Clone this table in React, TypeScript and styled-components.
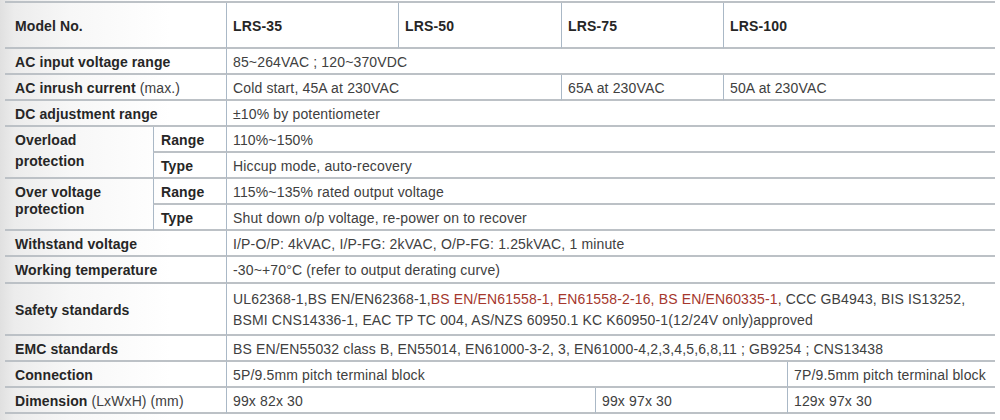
import React from "react"
import styled, { createGlobalStyle } from "styled-components"

const GlobalStyle = createGlobalStyle`
  html, body {
    margin: 0;
    padding: 0;
  }
  body {
    width: 1000px;
    height: 420px;
    overflow: hidden;
    font-family: "Liberation Sans", Arial, sans-serif;
    background: linear-gradient(90deg, #e0e0e0 0px, #ececec 14px, #f7f7f7 70px, #ffffff 170px);
  }
`

const Table = styled.div`
  display: grid;
  grid-template-columns: 148px 73px 172px 163px 34px 128px 64px 208px;
  grid-template-rows: 46px repeat(8, 26px) 27px 52px 26px 26px 26px;
  width: 990px;
  margin: 1px 0 0 5px;
  border-top: 2px solid #bcc1c6;
  font-size: 14px;
  color: #404040;
`

interface CellProps {
  $span?: number
  $rows?: number
  $kind?: "label" | "sub" | "value"
  $top?: number
  $lh?: number
}

const Cell = styled.div<CellProps>`
  box-sizing: border-box;
  grid-column: span ${(p) => p.$span ?? 1};
  grid-row: span ${(p) => p.$rows ?? 1};
  border-bottom: 2px solid #bcc1c6;
  border-left: ${(p) => (p.$kind === "label" ? "none" : "1px solid #aab8c6")};
  padding-left: ${(p) => (p.$kind === "label" ? "10px" : p.$kind === "sub" ? "7px" : "6px")};
  padding-top: ${(p) => p.$top ?? 1}px;
  display: flex;
  align-items: ${(p) => (p.$top !== undefined ? "flex-start" : "center")};
  line-height: ${(p) => p.$lh ?? 18}px;
  white-space: nowrap;
  letter-spacing: ${(p) => (p.$kind === "value" ? "0.15px" : "0.1px")};
  font-weight: ${(p) => (p.$kind === "value" ? 400 : 700)};
  color: ${(p) => (p.$kind === "value" ? "#404040" : "#262626")};
`

const Head = styled.span`
  font-weight: 700;
  color: #262626;
`

const Thin = styled.span`
  font-weight: 400;
  color: #404040;
`

const Red = styled.span`
  color: #a5372d;
`

export default function App() {
  return (
    <>
      <GlobalStyle />
      <Table>
        <Cell $kind="label" $span={2}>Model No.</Cell>
        <Cell $kind="value"><Head>LRS-35</Head></Cell>
        <Cell $kind="value"><Head>LRS-50</Head></Cell>
        <Cell $kind="value" $span={2}><Head>LRS-75</Head></Cell>
        <Cell $kind="value" $span={2}><Head>LRS-100</Head></Cell>

        <Cell $kind="label" $span={2}>AC input voltage range</Cell>
        <Cell $kind="value" $span={6}>85~264VAC ; 120~370VDC</Cell>

        <Cell $kind="label" $span={2}>AC inrush current&nbsp;<Thin>(max.)</Thin></Cell>
        <Cell $kind="value" $span={2}>Cold start, 45A at 230VAC</Cell>
        <Cell $kind="value" $span={2}>65A at 230VAC</Cell>
        <Cell $kind="value" $span={2}>50A at 230VAC</Cell>

        <Cell $kind="label" $span={2}>DC adjustment range</Cell>
        <Cell $kind="value" $span={6}>±10% by potentiometer</Cell>

        <Cell $kind="label" $rows={2} $top={3} $lh={21}>Overload<br />protection</Cell>
        <Cell $kind="sub">Range</Cell>
        <Cell $kind="value" $span={6}>110%~150%</Cell>
        <Cell $kind="sub">Type</Cell>
        <Cell $kind="value" $span={6}>Hiccup mode, auto-recovery</Cell>

        <Cell $kind="label" $rows={2} $top={5} $lh={17}>Over voltage<br />protection</Cell>
        <Cell $kind="sub">Range</Cell>
        <Cell $kind="value" $span={6}>115%~135% rated output voltage</Cell>
        <Cell $kind="sub">Type</Cell>
        <Cell $kind="value" $span={6}>Shut down o/p voltage, re-power on to recover</Cell>

        <Cell $kind="label" $span={2}>Withstand voltage</Cell>
        <Cell $kind="value" $span={6}>I/P-O/P: 4kVAC, I/P-FG: 2kVAC, O/P-FG: 1.25kVAC, 1 minute</Cell>

        <Cell $kind="label" $span={2}>Working temperature</Cell>
        <Cell $kind="value" $span={6}>-30~+70°C (refer to output derating curve)</Cell>

        <Cell $kind="label" $span={2}>Safety standards</Cell>
        <Cell $kind="value" $span={6} $lh={21}>
          <span>
            UL62368-1,BS EN/EN62368-1,<Red>BS EN/EN61558-1, EN61558-2-16, BS EN/EN60335-1</Red>, CCC GB4943, BIS IS13252,
            <br />
            BSMI CNS14336-1, EAC TP TC 004, AS/NZS 60950.1 KC K60950-1(12/24V only)approved
          </span>
        </Cell>

        <Cell $kind="label" $span={2}>EMC standards</Cell>
        <Cell $kind="value" $span={6}>BS EN/EN55032 class B, EN55014, EN61000-3-2, 3, EN61000-4,2,3,4,5,6,8,11 ; GB9254 ; CNS13438</Cell>

        <Cell $kind="label" $span={2}>Connection</Cell>
        <Cell $kind="value" $span={5}>5P/9.5mm pitch terminal block</Cell>
        <Cell $kind="value">7P/9.5mm pitch terminal block</Cell>

        <Cell $kind="label" $span={2}>Dimension&nbsp;<Thin>(LxWxH) (mm)</Thin></Cell>
        <Cell $kind="value" $span={3}>99x 82x 30</Cell>
        <Cell $kind="value" $span={2}>99x 97x 30</Cell>
        <Cell $kind="value">129x 97x 30</Cell>
      </Table>
    </>
  )
}
